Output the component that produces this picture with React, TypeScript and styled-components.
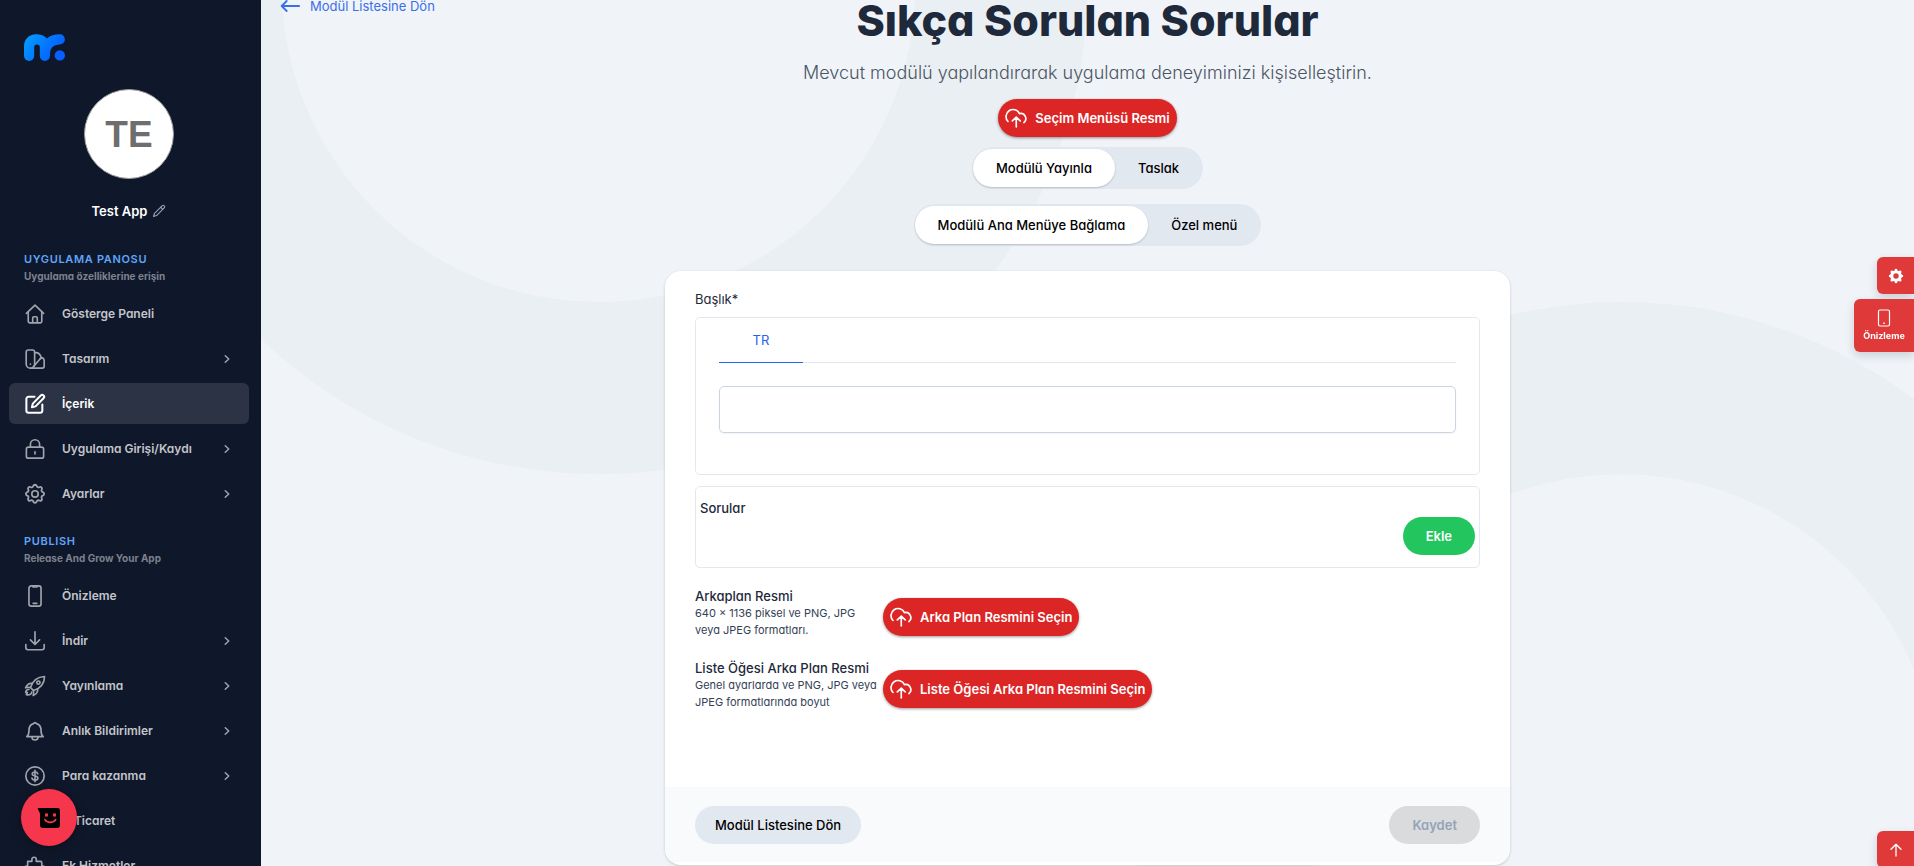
import React, { useState } from "react";
import styled, { createGlobalStyle, css } from "styled-components";

const GlobalStyle = createGlobalStyle`
  *, *::before, *::after { box-sizing: border-box; }
  html, body, #root { height: 100%; }
  body {
    margin: 0;
    overflow: hidden;
    background: #f0f4f9;
    color: #1e293b;
    font-family: Inter, "Noto Sans", sans-serif;
    font-feature-settings: "cv11";
    font-size: 13px;
    line-height: 18px;
  }
  button, input { font: inherit; font-feature-settings: inherit; }
  button { border: 0; padding: 0; cursor: pointer; }
  a { text-decoration: none; color: inherit; }
  h1, h2, p { margin: 0; }
`;

/* ---------- icons ---------- */

const Svg = styled.svg.attrs({ "aria-hidden": true })<{ $size?: number; $weight?: number }>`
  flex: none;
  width: ${(p) => p.$size ?? 22}px;
  height: ${(p) => p.$size ?? 22}px;
  fill: none;
  stroke: currentColor;
  stroke-width: ${(p) => p.$weight ?? 1.8};
  stroke-linecap: round;
  stroke-linejoin: round;
`;

const icons = {
  home: (
    <>
      <path d="M2.6 11.4 12 2.4l9.4 9" />
      <path d="M4.600 9.800V20a1.600 1.600 0 0 0 1.600 1.600h11.600a1.600 1.600 0 0 0 1.600-1.600V9.800" />
      <path d="M9.500 21.400v-5a1.400 1.400 0 0 1 1.400-1.400h2.200a1.400 1.400 0 0 1 1.400 1.400v5" />
    </>
  ),
  swatch: (
    <>
      <path d="M4.400 2.200h5.200a2 2 0 0 1 2 2V17.500a4.600 4.600 0 0 1-9.200 0V4.200a2 2 0 0 1 2-2Z" />
      <path d="M11.600 5.200c3.600-.9 6 1.700 7.300 5.200L10 20.800" />
      <path d="m17.800 11.600 2.400-.9c1 .6 1.800 1.700 1.800 3v6.300a2 2 0 0 1-2 2H7" />
      <path d="M7 17.600v.1" />
    </>
  ),
  edit: (
    <>
      <path d="M11.500 4.200H5a2.400 2.400 0 0 0-2.400 2.400v12.600A2.400 2.400 0 0 0 5 21.600h12.600a2.400 2.400 0 0 0 2.400-2.400v-6.700" />
      <path d="M18.300 2.700a2.100 2.100 0 0 1 3 3L12.600 14.600l-4 1 1-4Z" />
    </>
  ),
  lock: (
    <>
      <rect x="2.600" y="10" width="18.800" height="12" rx="2.200" />
      <path d="M7 10V6.900a5 5 0 0 1 10 0V10" />
      <path d="M12 15v2.400" />
    </>
  ),
  cog: (
    <>
      <path d="M10.300 3.600c.45-1.800 2.950-1.800 3.400 0a1.750 1.750 0 0 0 2.600 1.070c1.550-.94 3.300.83 2.370 2.370a1.750 1.750 0 0 0 1.070 2.570c1.750.43 1.750 2.920 0 3.350a1.750 1.750 0 0 0-1.070 2.580c.94 1.540-.83 3.310-2.370 2.370a1.750 1.750 0 0 0-2.600 1.060c-.45 1.760-2.950 1.760-3.400 0a1.750 1.750 0 0 0-2.600-1.060c-1.540.94-3.310-.83-2.370-2.370a1.750 1.750 0 0 0-1.070-2.580c-1.750-.43-1.750-2.920 0-3.350A1.750 1.750 0 0 0 5.330 7.040c-.94-1.540.83-3.310 2.370-2.370 1 .6 2.300.08 2.600-1.070Z" transform="translate(-1.200 -.6) scale(1.100)" />
      <circle cx="12" cy="11.900" r="3.500" />
    </>
  ),
  phone: (
    <>
      <rect x="5.400" y="1" width="13.200" height="22" rx="2.600" />
      <path d="M9.800 1v1.200h4.400V1M10 20h4" />
    </>
  ),
  download: <path d="M12 2v13.500M7 10.800l5 5 5-5M2 15.800v3.400a2.300 2.300 0 0 0 2.300 2.300h15.400a2.300 2.300 0 0 0 2.300-2.300v-3.400" />,
  rocket: (
    <>
      <path d="M7 13.600C9 7.500 14 2 22.400 1.600 22.200 10 16.500 15 10.400 17Z" />
      <path d="M9 9.200C5.800 8.600 3.300 10.600 1.700 14c1.900-.6 3.500-.6 5.300-.4M14.800 15c.6 3.200-1.400 6-4.800 7.400.6-1.900.6-3.700.4-5.400" />
      <circle cx="15.700" cy="8.300" r="1.800" />
      <path d="M5.400 15.800c-2.200-.2-3.400 1.700-3.600 3.300 1-.4 1.800-.3 1.900.1.100.5-.6 1.100-1.200 2.200 2.700.6 6.200-.1 5.900-2.900" />
    </>
  ),
  bell: (
    <>
      <path d="M3 18.200c1.800-1.300 2.400-3 2.400-6.400C5.400 7.600 7.600 4.600 10.400 4a1.700 1.700 0 0 1 3.200 0c2.800.6 5 3.600 5 7.800 0 3.400.6 5.100 2.400 6.400Z" />
      <path d="M8.700 18.500a3.300 3.300 0 0 0 6.600 0" />
    </>
  ),
  dollar: (
    <>
      <circle cx="12" cy="12" r="10" />
      <path d="M15 9.600c-.3-1.400-1.400-2-3-2-1.800 0-3 .8-3 2.200 0 3 6.200 1.400 6.200 4.400 0 1.400-1.300 2.300-3.200 2.300s-3-.8-3.300-2.200M12 5.800v12.400" />
    </>
  ),
  cart: (
    <>
      <path d="M2 3h3l3 12h11l2-8H6" />
      <circle cx="9" cy="19" r="1.600" />
      <circle cx="17" cy="19" r="1.600" />
    </>
  ),
  puzzle: (
    <path d="M4 7h4.600V4.800a2.400 2.400 0 0 1 4.800 0V7H18a1.400 1.400 0 0 1 1.400 1.400V12h1a2.400 2.400 0 0 1 0 4.800h-1v4.600H4V17H3a2.400 2.400 0 0 1 0-5h1Z" />
  ),
  chevron: <path d="m8.500 5.500 7 6.500-7 6.500" />,
  pencil: (
    <>
      <path d="M17.300 3.100a2.500 2.500 0 0 1 3.600 3.600L7.800 19.800 2.600 21.400l1.600-5.200Z" />
      <path d="m14.800 5.600 3.600 3.600" />
    </>
  ),
  upload: <path d="M3.300 15.800A7.700 7.700 0 1 1 15.800 7.200 5.600 5.600 0 0 1 20.600 17M12.300 21.800V11.500M8 15.200l4.300-4.200 4.300 4.200" />,
  back: <path d="M23 12H2M8 6l-6 6 6 6" />,
  up: <path d="M12 21V4M4.500 11 12 3.500l7.500 7.500" />,
};

type IconName = keyof typeof icons;

const Icon = ({ name, size, weight }: { name: IconName; size?: number; weight?: number }) => (
  <Svg viewBox="0 0 24 24" $size={size} $weight={weight}>
    {icons[name]}
  </Svg>
);

/* ---------- sidebar ---------- */

const Shell = styled.div`
  display: flex;
  height: 100vh;
`;

const Sidebar = styled.aside`
  flex: none;
  width: 261px;
  height: 100%;
  padding: 34px 12px 0 9px;
  overflow: hidden;
  background: #0f172a;
`;

const Logo = styled.svg`
  display: block;
  width: 41px;
  height: 27px;
  margin-left: 15px;
`;

const Profile = styled.div`
  display: flex;
  flex-direction: column;
  align-items: center;
  gap: 23px;
  margin: 28px 0 30px;
`;

const Avatar = styled.div`
  display: grid;
  place-items: center;
  width: 90px;
  height: 90px;
  padding-top: 2px;
  border: 1px solid #9a9a9a;
  border-radius: 50%;
  background: #fff;
  color: #6e6e6e;
  font: bold 37px/44px "Liberation Sans", Arial, sans-serif;
`;

const AppName = styled.button`
  display: flex;
  align-items: center;
  gap: 5px;
  background: none;
  color: #fff;
  font-size: 13px;
  font-weight: 600;
  line-height: 18px;
  svg { color: #94a3b8; }
`;

const Section = styled.section`
  margin-bottom: 18px;
`;

const SectionTitle = styled.h2`
  padding-left: 15px;
  color: #60a5fa;
  font-size: 11px;
  font-weight: 600;
  line-height: 18px;
  letter-spacing: 0.06em;
`;

const SectionNote = styled.p`
  padding-left: 15px;
  margin-bottom: 9px;
  color: #7d828d;
  font-size: 10px;
  font-weight: 700;
  line-height: 16px;
`;

const NavList = styled.nav`
  display: flex;
  flex-direction: column;
  gap: 4px;
`;

const NavItem = styled.a<{ $active?: boolean }>`
  display: flex;
  align-items: center;
  gap: 16px;
  height: 41px;
  padding: 0 16px 0 15px;
  border-radius: 6px;
  color: #c3c5ca;
  font-size: 12px;
  font-weight: 600;
  svg { color: #a0a4ad; }
  ${(p) =>
    p.$active &&
    css`
      background: #2c3344;
      color: #fff;
      svg { color: #fff; }
    `}
`;

const NavLabel = styled.span`
  flex: 1;
`;

type Item = { label: string; icon: IconName; more?: boolean; active?: boolean };

const sections: { title: string; note: string; items: Item[] }[] = [
  {
    title: "UYGULAMA PANOSU",
    note: "Uygulama özelliklerine erişin",
    items: [
      { label: "Gösterge Paneli", icon: "home" },
      { label: "Tasarım", icon: "swatch", more: true },
      { label: "İçerik", icon: "edit", active: true },
      { label: "Uygulama Girişi/Kaydı", icon: "lock", more: true },
      { label: "Ayarlar", icon: "cog", more: true },
    ],
  },
  {
    title: "PUBLISH",
    note: "Release And Grow Your App",
    items: [
      { label: "Önizleme", icon: "phone" },
      { label: "İndir", icon: "download", more: true },
      { label: "Yayınlama", icon: "rocket", more: true },
      { label: "Anlık Bildirimler", icon: "bell", more: true },
      { label: "Para kazanma", icon: "dollar", more: true },
      { label: "E-Ticaret", icon: "cart" },
      { label: "Ek Hizmetler", icon: "puzzle" },
    ],
  },
];

/* ---------- main ---------- */

const Main = styled.main`
  position: relative;
  flex: 1;
  min-width: 0;
  height: 100%;
  overflow: hidden;
`;

const Backdrop = styled.svg`
  position: absolute;
  top: 0;
  left: 0;
  width: 100%;
  height: calc(100% - 45px);
  overflow: visible;
  fill: none;
  stroke: #eaeff3;
  stroke-width: 100;
`;

const Content = styled.div`
  position: relative;
  display: flex;
  flex-direction: column;
  align-items: center;
  margin-top: -3px;
`;

const BackLink = styled.a`
  display: flex;
  align-items: center;
  align-self: flex-start;
  gap: 10px;
  height: 18px;
  margin: 0 0 -22px 19px;
  color: #3b6fe8;
  font-size: 13px;
`;

const Title = styled.h1`
  color: #1e293b;
  font-size: 43px;
  font-weight: 800;
  line-height: 54px;
`;

const Subtitle = styled.p`
  margin: 14px 0;
  color: #4b5563;
  font-size: 18px;
  font-weight: 300;
  line-height: 24px;
`;

const buttonShape = css`
  height: 38px;
  border-radius: 19px;
  font-size: 13px;
  font-weight: 500;
  white-space: nowrap;
`;

const UploadButton = styled.button`
  ${buttonShape}
  display: flex;
  align-items: center;
  gap: 8px;
  padding: 0 7px;
  background: #dc2626;
  color: #fff;
  font-weight: 600;
  box-shadow: 0 1px 3px rgba(0, 0, 0, 0.4);
`;

const Toggle = styled.div`
  display: flex;
  height: 42px;
  margin-top: 10px;
  padding: 2px 1px;
  border-radius: 21px;
  background: #e2e8f0;
  & + & { margin-top: 15px; }
`;

const ToggleOption = styled.button<{ $on: boolean }>`
  ${buttonShape}
  padding: 0 23px;
  background: ${(p) => (p.$on ? "#fff" : "none")};
  box-shadow: ${(p) => (p.$on ? "0 1px 2px rgba(15, 23, 42, 0.2)" : "none")};
  color: #000;
`;

const Card = styled.form`
  width: 100%;
  max-width: 845px;
  margin-top: 25px;
  padding-bottom: 3px;
  overflow: hidden;
  border-radius: 16px;
  background: #fff;
  box-shadow: 0 1px 3px rgba(15, 23, 42, 0.2);
`;

const CardBody = styled.div`
  display: flex;
  flex-direction: column;
  min-height: 516px;
  padding: 19px 30px 0;
`;

const FieldLabel = styled.label`
  margin-bottom: 9px;
  font-size: 13px;
`;

const Panel = styled.div`
  border: 1px solid #e2e8f0;
  border-radius: 5px;
`;

const TitlePanel = styled(Panel)`
  padding: 0 23px 41px;
`;

const Tabs = styled.div`
  display: flex;
  margin-bottom: 23px;
  border-bottom: 1px solid #e2e8f0;
`;

const Tab = styled.button`
  width: 84px;
  height: 45px;
  margin-bottom: -1px;
  border-bottom: 1px solid #2563eb;
  background: none;
  color: #2563eb;
  font-size: 13px;
`;

const TextInput = styled.input`
  display: block;
  width: 100%;
  height: 47px;
  padding: 0 12px;
  border: 1px solid #cbd5e1;
  border-radius: 5px;
  background: #fff;
  box-shadow: 0 1px 2px rgba(0, 0, 0, 0.05);
`;

const QuestionPanel = styled(Panel)`
  display: flex;
  flex-direction: column;
  margin: 11px 0 19px;
  padding: 12px 4px;
`;

const QuestionTitle = styled.span`
  font-size: 13px;
  font-weight: 500;
`;

const AddButton = styled.button`
  ${buttonShape}
  align-self: flex-end;
  padding: 0 23px;
  background: #22c55e;
  color: #fff;
  font-weight: 600;
`;

const UploadRow = styled.div`
  display: flex;
  align-items: center;
  height: 60px;
  margin-bottom: 12px;
`;

const UploadInfo = styled.div`
  width: 188px;
  flex: none;
  padding-bottom: 8px;
  white-space: nowrap;
`;

const UploadTitle = styled.p`
  font-size: 13px;
  font-weight: 500;
  line-height: 18px;
`;

const UploadNote = styled.p`
  color: #334155;
  font-size: 11px;
  line-height: 17px;
`;

const CardFooter = styled.div`
  display: flex;
  align-items: center;
  justify-content: space-between;
  height: 75px;
  padding: 0 30px;
  background: #f8fafc;
`;

const SecondaryButton = styled.button`
  ${buttonShape}
  padding: 0 20px;
  background: #e2e8f0;
  color: #000;
`;

const SaveButton = styled.button`
  ${buttonShape}
  padding: 0 23px;
  background: #dadbdd;
  color: #94a3b8;
  font-weight: 600;
`;

/* ---------- floating controls ---------- */

const SideDock = styled.div`
  position: fixed;
  top: 257px;
  right: 0;
  display: flex;
  flex-direction: column;
  align-items: flex-end;
  gap: 5px;
`;

const DockButton = styled.button<{ $wide?: boolean }>`
  display: flex;
  flex-direction: column;
  align-items: center;
  justify-content: center;
  gap: 2px;
  width: ${(p) => (p.$wide ? 60 : 37)}px;
  height: ${(p) => (p.$wide ? 53 : 37)}px;
  border-radius: 6px 0 0 6px;
  background: #df3939;
  color: #fff;
  font-size: 9px;
  font-weight: 700;
  line-height: 14px;
  box-shadow: 0 4px 10px rgba(15, 23, 42, 0.16);
`;

const TopDock = styled.div`
  position: fixed;
  right: 0;
  bottom: -2px;
`;

const ChatButton = styled.button`
  position: fixed;
  left: 21px;
  bottom: 20px;
  display: grid;
  place-items: center;
  width: 56px;
  height: 57px;
  border-radius: 50%;
  background: #f5364c;
  box-shadow: 0 2px 12px rgba(0, 0, 0, 0.3);
`;

const publishOptions = ["Modülü Yayınla", "Taslak"];
const menuOptions = ["Modülü Ana Menüye Bağlama", "Özel menü"];

const Segmented = ({ options, label }: { options: string[]; label: string }) => {
  const [selected, setSelected] = useState(0);
  return (
    <Toggle role="group" aria-label={label}>
      {options.map((option, i) => (
        <ToggleOption
          key={option}
          type="button"
          $on={i === selected}
          aria-pressed={i === selected}
          onClick={() => setSelected(i)}
        >
          {option}
        </ToggleOption>
      ))}
    </Toggle>
  );
};

export default function App() {
  const [title, setTitle] = useState("");

  return (
    <>
      <GlobalStyle />
      <Shell>
        <Sidebar>
          <Logo viewBox="0 0 41 27" role="img" aria-label="Logo">
            <defs>
              <linearGradient id="brand" x1="0" y1="0" x2="1" y2="0.5">
                <stop offset="0" stopColor="#02a0ff" />
                <stop offset="1" stopColor="#045bff" />
              </linearGradient>
            </defs>
            <path
              fill="url(#brand)"
              d="M0 12.500C0 5.500 5 .3 12 .3c4.600 0 8.200 1.300 11 4.200C26.300 1.700 30.300.3 35.800.3a5.100 5.100 0 0 1 0 10.200C29.500 10.700 26 14 26 20v1.800a5 5 0 0 1-10.200 0V13c0-3.300-5.600-3.300-5.600 0v8.800a5.100 5.100 0 0 1-10.200 0Z"
            />
            <circle cx="35.800" cy="21.400" r="5.200" fill="#0560ff" />
          </Logo>
          <Profile>
            <Avatar>TE</Avatar>
            <AppName type="button">
              Test App
              <Icon name="pencil" size={14} weight={1.9} />
            </AppName>
          </Profile>
          {sections.map((section) => (
            <Section key={section.title}>
              <SectionTitle>{section.title}</SectionTitle>
              <SectionNote>{section.note}</SectionNote>
              <NavList aria-label={section.title}>
                {section.items.map((item) => (
                  <NavItem key={item.label} href="#" $active={item.active}>
                    <Icon name={item.icon} size={22} weight={item.active ? 2.2 : 1.8} />
                    <NavLabel>{item.label}</NavLabel>
                    {item.more && <Icon name="chevron" size={12} weight={3} />}
                  </NavItem>
                ))}
              </NavList>
            </Section>
          ))}
        </Sidebar>

        <Main>
          <Backdrop viewBox="0 0 960 540" preserveAspectRatio="xMidYMid slice" aria-hidden="true">
            <circle cx="196" cy="23" r="234" />
            <circle cx="790" cy="491" r="234" />
          </Backdrop>
          <Content>
            <BackLink href="#">
              <Icon name="back" size={20} weight={2.2} />
              Modül Listesine Dön
            </BackLink>
            <Title>Sıkça Sorulan Sorular</Title>
            <Subtitle>Mevcut modülü yapılandırarak uygulama deneyiminizi kişiselleştirin.</Subtitle>
            <UploadButton type="button">
              <Icon name="upload" />
              Seçim Menüsü Resmi
            </UploadButton>
            <Segmented options={publishOptions} label="Yayın durumu" />
            <Segmented options={menuOptions} label="Menü bağlantısı" />

            <Card onSubmit={(e) => e.preventDefault()}>
              <CardBody>
                <FieldLabel htmlFor="module-title">Başlık*</FieldLabel>
                <TitlePanel>
                  <Tabs role="tablist">
                    <Tab type="button" role="tab" aria-selected="true">TR</Tab>
                  </Tabs>
                  <TextInput
                    id="module-title"
                    type="text"
                    value={title}
                    onChange={(e) => setTitle(e.target.value)}
                  />
                </TitlePanel>
                <QuestionPanel>
                  <QuestionTitle>Sorular</QuestionTitle>
                  <AddButton type="button">Ekle</AddButton>
                </QuestionPanel>
                <UploadRow>
                  <UploadInfo>
                    <UploadTitle>Arkaplan Resmi</UploadTitle>
                    <UploadNote>640 × 1136 piksel ve PNG, JPG<br />veya JPEG formatları.</UploadNote>
                  </UploadInfo>
                  <UploadButton type="button">
                    <Icon name="upload" />
                    Arka Plan Resmini Seçin
                  </UploadButton>
                </UploadRow>
                <UploadRow>
                  <UploadInfo>
                    <UploadTitle>Liste Öğesi Arka Plan Resmi</UploadTitle>
                    <UploadNote>Genel ayarlarda ve PNG, JPG veya<br />JPEG formatlarında boyut</UploadNote>
                  </UploadInfo>
                  <UploadButton type="button">
                    <Icon name="upload" />
                    Liste Öğesi Arka Plan Resmini Seçin
                  </UploadButton>
                </UploadRow>
              </CardBody>
              <CardFooter>
                <SecondaryButton type="button">Modül Listesine Dön</SecondaryButton>
                <SaveButton type="submit" disabled>Kaydet</SaveButton>
              </CardFooter>
            </Card>
          </Content>
        </Main>
      </Shell>

      <SideDock>
        <DockButton type="button" aria-label="Ayarlar">
          <Svg viewBox="0 0 20 20" $size={18} $weight={0}>
            <path
              fill="currentColor"
              fillRule="evenodd"
              d="M11.490 3.170c-.38-1.560-2.600-1.560-2.980 0a1.532 1.532 0 0 1-2.286.948c-1.372-.836-2.942.734-2.106 2.106.54.886.061 2.042-.947 2.287-1.561.379-1.561 2.600 0 2.978a1.532 1.532 0 0 1 .947 2.287c-.836 1.372.734 2.942 2.106 2.106a1.532 1.532 0 0 1 2.287.947c.379 1.561 2.600 1.561 2.978 0a1.533 1.533 0 0 1 2.287-.947c1.372.836 2.942-.734 2.106-2.106a1.533 1.533 0 0 1 .947-2.287c1.561-.379 1.561-2.600 0-2.978a1.532 1.532 0 0 1-.947-2.287c.836-1.372-.734-2.942-2.106-2.106a1.532 1.532 0 0 1-2.287-.947ZM10 13a3 3 0 1 0 0-6 3 3 0 0 0 0 6Z"
            />
          </Svg>
        </DockButton>
        <DockButton type="button" $wide>
          <Svg viewBox="0 0 18 18" $size={18} $weight={1.2}>
            <rect x="3.500" y="1" width="11" height="16" rx="1.500" />
            <path d="M8.600 14.200h.8" />
          </Svg>
          Önizleme
        </DockButton>
      </SideDock>
      <TopDock>
        <DockButton type="button" aria-label="Yukarı">
          <Icon name="up" size={16} weight={2} />
        </DockButton>
      </TopDock>
      <ChatButton type="button" aria-label="Sohbet">
        <svg width="24" height="22" viewBox="0 0 24 22" aria-hidden="true">
          <path d="M.6 1h20A2.400 2.400 0 0 1 23 3.400v15.200a2.400 2.400 0 0 1-2.400 2.400H5.400A2.400 2.400 0 0 1 3 18.600V7.400C3 5 1.600 4.400.6 1Z" fill="#000" />
          <rect x="8" y="6.500" width="3" height="3" fill="#f5364c" />
          <rect x="16" y="6.500" width="3" height="3" fill="#f5364c" />
          <path d="M8 12.600c2 3.600 8.500 3.600 10.600 0" fill="none" stroke="#f5364c" strokeWidth="1.800" strokeLinecap="round" />
        </svg>
      </ChatButton>
    </>
  );
}
